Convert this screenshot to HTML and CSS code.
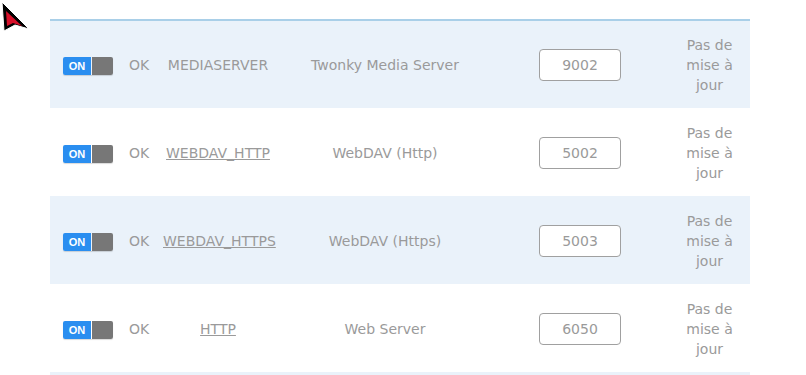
FILE: index.html
```html
<!DOCTYPE html>
<html lang="fr">
<head>
    <meta charset="UTF-8">
    <title>Services</title>
    <link rel="stylesheet" href="styles.css">
</head>
<body>
    <svg class="cursor" width="32" height="32" viewBox="0 0 32 32">
        <polygon points="2,2 29,29 15,25 4,31" fill="#000" stroke="#fff" stroke-width="1"/>
        <polygon points="6,11 22,26 13,23 7,26" fill="#d8102a"/>
    </svg>

    <div class="wrap">
        <table class="services">
            <colgroup>
                <col class="c-toggle">
                <col class="c-state">
                <col class="c-name">
                <col class="c-desc">
                <col class="c-port">
                <col class="c-status">
            </colgroup>
            <tbody>
                <tr class="alt">
                    <td><span class="switch"><span class="on">ON</span><span class="off"></span></span></td>
                    <td>OK</td>
                    <td>MEDIASERVER</td>
                    <td>Twonky Media Server</td>
                    <td><input class="port" type="text" value="9002"></td>
                    <td class="status">Pas de mise à jour</td>
                </tr>
                <tr>
                    <td><span class="switch"><span class="on">ON</span><span class="off"></span></span></td>
                    <td>OK</td>
                    <td><a href="#">WEBDAV_HTTP</a></td>
                    <td>WebDAV (Http)</td>
                    <td><input class="port" type="text" value="5002"></td>
                    <td class="status">Pas de mise à jour</td>
                </tr>
                <tr class="alt">
                    <td><span class="switch"><span class="on">ON</span><span class="off"></span></span></td>
                    <td>OK</td>
                    <td><a href="#">WEBDAV_HTTPS</a></td>
                    <td>WebDAV (Https)</td>
                    <td><input class="port" type="text" value="5003"></td>
                    <td class="status">Pas de mise à jour</td>
                </tr>
                <tr>
                    <td><span class="switch"><span class="on">ON</span><span class="off"></span></span></td>
                    <td>OK</td>
                    <td><a href="#">HTTP</a></td>
                    <td>Web Server</td>
                    <td><input class="port" type="text" value="6050"></td>
                    <td class="status">Pas de mise à jour</td>
                </tr>
                <tr class="alt">
                    <td></td><td></td><td></td><td></td><td></td><td></td>
                </tr>
            </tbody>
        </table>
    </div>
</body>
</html>
```

FILE: styles.css
```css
* {
    box-sizing: border-box;
    margin: 0;
    padding: 0;
}

body {
    font-family: 'DejaVu Sans', sans-serif;
    font-size: 14px;
    color: #9a9a9a;
    background: #fff;
    overflow: hidden;
}

.cursor {
    position: absolute;
    top: 0;
    left: 0;
}

.wrap {
    padding: 19px 56px 0 50px;
}

.services {
    width: 700px;
    border-collapse: collapse;
    table-layout: fixed;
    border-top: 2px solid #a9cfe8;
}

.c-toggle { width: 71px; }
.c-state { width: 36px; }
.c-name { width: 122px; }
.c-desc { width: 212px; }
.c-port { width: 178px; }
.c-status { width: 81px; }

.services td {
    height: 88px;
    text-align: center;
    vertical-align: middle;
    padding: 1px 6px 0;
    line-height: 20px;
}

.services tr.alt td {
    background: #eaf2fa;
}

.services td:first-child {
    padding: 1px 0 0 13px;
    text-align: left;
}

.services a {
    color: #9a9a9a;
}

.switch {
    display: inline-flex;
    width: 50px;
    height: 18px;
    border-radius: 2px;
    overflow: hidden;
    vertical-align: middle;
    box-shadow: 0 1px 1px rgba(0, 0, 0, 0.15);
}

.switch .on {
    width: 28px;
    background: #2a8ef0;
    color: #fff;
    font-family: 'Liberation Sans', sans-serif;
    font-weight: bold;
    font-size: 11px;
    line-height: 18px;
    text-align: center;
}

.switch .off {
    flex: 1;
    margin-left: 1px;
    background: #777;
}

.port {
    width: 82px;
    height: 32px;
    border: 1px solid #a0a0a0;
    border-radius: 4px;
    background: #fff;
    text-align: center;
    font-family: 'DejaVu Sans', sans-serif;
    font-size: 14px;
    color: #9a9a9a;
}
```
